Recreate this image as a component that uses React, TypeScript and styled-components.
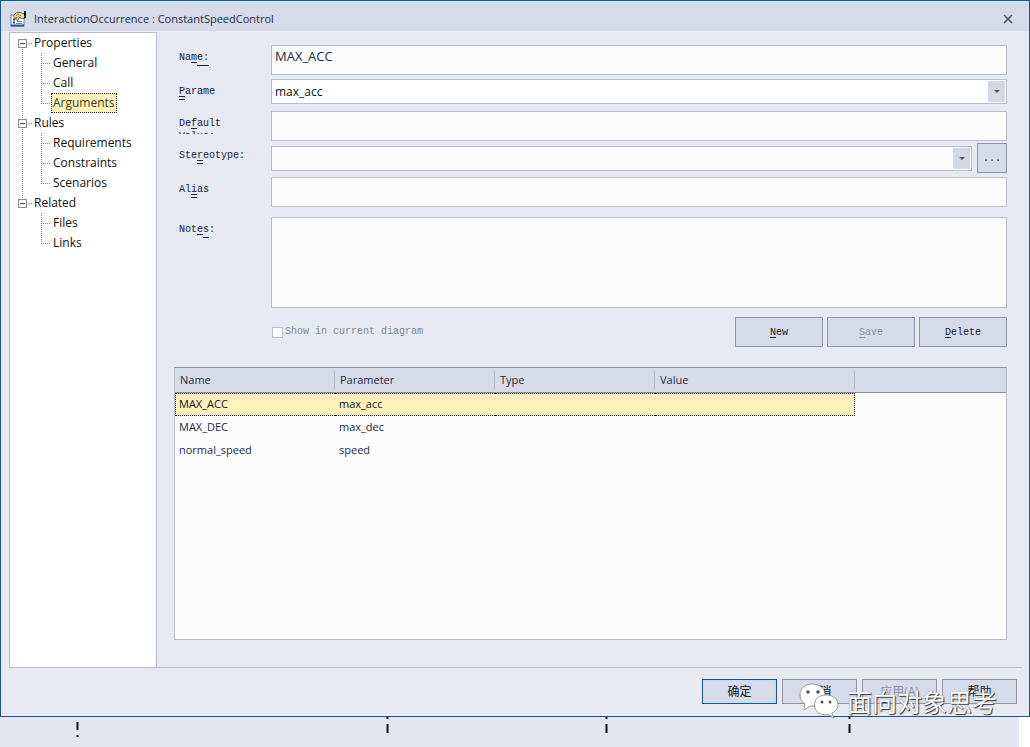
import React from "react";
import styled, { createGlobalStyle, css } from "styled-components";

const UI = `"Open Sans", "Noto Sans CJK SC", sans-serif`;
const MONO = `"Liberation Mono", monospace`;
const LINE = "#b8bccb";
const INK = "#1f2a44";
const DOTS = "repeating-linear-gradient(#888 0 1px, transparent 1px 2px)";

const Global = createGlobalStyle`
  * { box-sizing: border-box; }
  html, body, #root { height: 100%; }
  body { margin: 0; background: #e3e6f1; font: 12px/20px ${UI}; color: ${INK}; }
  button, input, textarea, select { font: inherit; color: inherit; border-radius: 0; margin: 0; }
`;

const Page = styled.div`
  min-height: 100vh;
  display: flex;
  flex-direction: column;
  background: linear-gradient(to left, #fff 11px, #e3e6f1 11px);
`;

const Dialog = styled.main`
  position: relative;
  flex: 1;
  display: flex;
  flex-direction: column;
  background: #e7eaf3;
  border: 1px solid #1a5687;
`;

const TitleBar = styled.header`
  height: 30px;
  display: flex;
  align-items: center;
  gap: 7px;
  padding: 3px 16px 0 9px;
  background: #d6dbe9;
  border-top: 2px solid #cfe3f8;
`;

const Title = styled.h1`
  flex: 1;
  margin: 0;
  font-size: 11px;
  font-weight: 400;
`;

const CloseButton = styled.button`
  display: flex;
  padding: 2px 0;
  border: 0;
  background: none;
  color: #4a4f63;
`;

const Body = styled.div`
  flex: 1;
  display: flex;
  margin: 0 7px 0 8px;
  border-bottom: 1px solid ${LINE};
`;

const Sidebar = styled.nav`
  flex: 0 0 148px;
  margin-top: 1px;
  padding-left: 8px;
  background: #fff;
  border: 1px solid ${LINE};
  border-bottom: 0;
  color: #111;
  font-size: 12px;
  line-height: 18px;
`;

const TreeGroup = styled.section`
  &:not(:last-child) { background: ${DOTS} 4px 14px / 1px 100% no-repeat; }
  &:not(:first-child) > div { background: ${DOTS} 4px 0 / 1px 6px no-repeat; }
`;

const GroupHead = styled.div`
  display: flex;
  align-items: center;
  gap: 2px;
  height: 20px;
`;

const Toggle = styled.button`
  width: 9px;
  height: 9px;
  padding: 0;
  border: 1px solid #8c8c8c;
  background: linear-gradient(#445, #445) center / 5px 1px no-repeat #fff;
`;

const Stub = styled.span<{ $w: number }>`
  width: ${(p) => p.$w}px;
  height: 1px;
  background: repeating-linear-gradient(90deg, #888 0 1px, transparent 1px 2px);
`;

const TreeList = styled.ul`
  list-style: none;
  margin: 0 0 0 23px;
  padding: 0;
`;

const TreeItem = styled.li`
  display: flex;
  align-items: center;
  gap: 1px;
  height: 20px;
  background: ${DOTS} 0 0 / 1px 100% no-repeat;
  &:last-child { background-size: 1px 50%; }
`;

const TreeLink = styled.a<{ $active?: boolean }>`
  display: block;
  height: 20px;
  padding: 0 1px;
  color: inherit;
  text-decoration: none;
  border: 1px dotted transparent;
  ${(p) => p.$active && css`
    background: #fff2bd;
    border-color: #222;
    color: #3d3a20;
  `}
`;

const Content = styled.div`
  flex: 1;
  min-width: 0;
  display: flex;
  flex-direction: column;
  padding: 14px 15px 27px 17px;
`;

const Form = styled.form`
  display: flex;
  flex-direction: column;
`;

const Field = styled.div<{ $gap?: number; $h: number }>`
  display: grid;
  grid-template-columns: 97px minmax(0, 1fr);
  height: ${(p) => p.$h}px;
  margin-bottom: ${(p) => p.$gap ?? 4}px;
`;

const Label = styled.label`
  padding: 6px 0 0 5px;
  font: 10px/14px ${MONO};
  color: #1a2038;
  u { text-underline-offset: 2px; }
`;

const ClippedLabel = styled(Label)`
  width: 70px;
  height: 23px;
  overflow: hidden;
  line-height: 13px;
`;

/* Second, lower accelerator stroke beneath a letter */
const Low = styled.span`
  padding-bottom: 2px;
  border-bottom: 1px solid currentColor;
`;

const boxStyle = css`
  width: 100%;
  min-width: 0;
  border: 1px solid ${LINE};
  background: #fcfcfc;
  outline: 0;
`;

const TextBox = styled.input`
  ${boxStyle}
  height: 30px;
  padding: 0 3px 9px;
  font-size: 13px;
`;

const Notes = styled.textarea`
  ${boxStyle}
  height: 91px;
  resize: none;
`;

const SelectBox = styled.div<{ $white?: boolean }>`
  flex: 1;
  height: 25px;
  display: grid;
  grid-template-columns: minmax(0, 1fr) 18px;
  border: 1px solid ${LINE};
  background: ${(p) => (p.$white ? "#fff" : "#fcfcfc")};
  > * { grid-row: 1; }
`;

const Select = styled.select`
  grid-column: 1 / 3;
  appearance: none;
  border: 0;
  padding: 0 3px;
  background: none;
  color: #111;
`;

const Arrow = styled.span`
  grid-column: 2;
  display: flex;
  align-items: center;
  justify-content: center;
  margin: 1px 1px 1px 0;
  background: #d3d9e6;
  color: #4f566b;
  pointer-events: none;
`;

const StereotypeRow = styled.div`
  display: flex;
  align-items: center;
  gap: 5px;
`;

const Button = styled.button<{ $w: number; $h: number; $mono?: boolean; $primary?: boolean }>`
  width: ${(p) => p.$w}px;
  height: ${(p) => p.$h}px;
  padding: 0;
  background: #d6dbe9;
  border: 1px solid ${(p) => (p.$primary ? "#1a5687" : "#8f94a8")};
  box-shadow: ${(p) => (p.$primary ? "inset 0 0 0 1px #c3ddf4" : "none")};
  ${(p) => p.$mono && css`padding-top: 2px; font: 10px/14px ${MONO};`}
  color: #10182e;
  &:disabled { color: #8b8e9c; }
  u { text-underline-offset: 2px; }
`;

const Actions = styled.div`
  display: flex;
  align-items: center;
  padding-left: 98px;
  margin-bottom: 20px;
`;

const Check = styled.label`
  flex: 1;
  display: flex;
  align-items: center;
  gap: 2px;
  font: 10px/14px ${MONO};
  color: #85888f;
  input {
    appearance: none;
    width: 11px;
    height: 11px;
    border: 1px solid #b9bdc9;
    background: #fff;
  }
`;

const ActionButtons = styled.div`
  display: flex;
  gap: 4px;
`;

const TableFrame = styled.div`
  flex: 1;
  border: 1px solid ${LINE};
  border-top-color: #8d93a5;
  background: linear-gradient(#d6dbe9 24px, #868c9e 24px 25px, #fcfcfc 25px);
`;

const Table = styled.table`
  table-layout: fixed;
  width: 680px;
  border-collapse: separate;
  border-spacing: 0;
  font-size: 11px;
  text-align: left;
  th {
    width: 160px;
    height: 25px;
    padding: 0 5px 1px;
    font-weight: 400;
    line-height: 18px;
    background: linear-gradient(#b6bdd0, #b6bdd0) right 3px / 1px 18px no-repeat;
  }
  th:last-child { width: 200px; }
  td { height: 23px; padding: 0 4px 1px; line-height: 20px; }
`;

const Row = styled.tr<{ $active?: boolean }>`
  ${(p) => p.$active && css`
    color: #111;
    td {
      background: #fff2bd;
      border: 1px dotted #111;
      border-width: 1px 0;
    }
    td:first-child { border-left-width: 1px; padding-left: 3px; }
    td:last-child { border-right-width: 1px; }
  `}
`;

const Footer = styled.footer`
  display: flex;
  justify-content: flex-end;
  gap: 5px;
  padding: 11px 12px 12px;
`;

const Watermark = styled.div`
  position: absolute;
  right: 32px;
  bottom: -3px;
  display: flex;
  align-items: center;
  gap: 8px;
  color: #fff;
  font: 25px/36px "Noto Sans CJK SC", sans-serif;
  text-shadow: 1px 1px 1px #333, 0 0 1px #777;
  pointer-events: none;
`;

const Backdrop = styled.svg`
  display: block;
  width: 100%;
  height: 30px;
`;

const DialogIcon = () => (
  <svg width="17" height="16" viewBox="0 0 17 16" aria-hidden="true">
    <rect x="1" y="4" width="13" height="11" fill="#fff" stroke="#5f7fb8" />
    <path d="M1 14.500h13" stroke="#2450a0" strokeWidth="2" />
    <path d="M3 8.500h2M3 11.500h2" stroke="#26437a" strokeWidth="2" />
    <path d="M7 10.500h5M6 12.500h6" stroke="#5b7ec0" />
    <path d="M3.500 4.500l3-3h4l2 1h2v5h-3l-2-1-2 3-2-1 1-2-2 1z" fill="#e6e08c" stroke="#4a4630" strokeWidth=".8" />
    <path d="M6 4.500l3-1M8 6l3-2" stroke="#8a8450" />
    <path d="M14 0h2v7h-2z" fill="#111" />
  </svg>
);

const Chevron = () => (
  <Arrow>
    <svg width="6" height="3" viewBox="0 0 6 3" aria-hidden="true">
      <path d="M0 0h6L3 3z" fill="currentColor" />
    </svg>
  </Arrow>
);

const ChatLogo = () => (
  <svg width="40" height="36" viewBox="0 0 40 36" aria-hidden="true">
    <g fill="#fff" stroke="#777" strokeWidth=".7">
      <path d="M13 1C6 1 1 6 1 12c0 4 2 7 5 9l-1 6 6-4c8 1 15-4 15-11S20 1 13 1z" />
      <path d="M27 12c-7 0-11.500 4-11.500 10s5.500 11 13.500 9.500l6 3.500-2-5c4-2 6-5 6-8 0-6-5-10-12-10z" />
    </g>
    <g fill="#555">
      <circle cx="9" cy="9" r="1.800" /><circle cx="19" cy="9" r="1.800" />
      <circle cx="23" cy="19" r="1.500" /><circle cx="31" cy="19" r="1.500" />
    </g>
  </svg>
);

const tree = [
  { name: "Properties", items: ["General", "Call", "Arguments"] },
  { name: "Rules", items: ["Requirements", "Constraints", "Scenarios"] },
  { name: "Related", items: ["Files", "Links"] },
];

const rows = [
  ["MAX_ACC", "max_acc"],
  ["MAX_DEC", "max_dec"],
  ["normal_speed", "speed"],
];

export default function App() {
  return (
    <Page>
      <Global />
      <Dialog>
        <TitleBar>
          <DialogIcon />
          <Title>InteractionOccurrence : ConstantSpeedControl</Title>
          <CloseButton aria-label="Close">
            <svg width="10" height="10" viewBox="0 0 10 10" aria-hidden="true">
              <path d="M1 1l8 8M9 1L1 9" stroke="currentColor" strokeWidth="1.500" />
            </svg>
          </CloseButton>
        </TitleBar>
        <Body>
          <Sidebar>
            {tree.map((g) => (
              <TreeGroup key={g.name}>
                <GroupHead>
                  <Toggle aria-label={`Collapse ${g.name}`} />
                  <Stub $w={3} />
                  {g.name}
                </GroupHead>
                <TreeList>
                  {g.items.map((t) => (
                    <TreeItem key={t}>
                      <Stub $w={9} />
                      <TreeLink href="#" $active={t === "Arguments"}>{t}</TreeLink>
                    </TreeItem>
                  ))}
                </TreeList>
              </TreeGroup>
            ))}
          </Sidebar>
          <Content>
            <Form onSubmit={(e) => e.preventDefault()}>
              <Field $h={30}>
                <Label htmlFor="name">Na<u>m</u><Low>e:</Low></Label>
                <TextBox id="name" defaultValue="MAX_ACC" />
              </Field>
              <Field $h={28}>
                <Label htmlFor="param"><Low><u>P</u></Low>arame</Label>
                <SelectBox $white>
                  <Select id="param"><option>max_acc</option></Select>
                  <Chevron />
                </SelectBox>
              </Field>
              <Field $h={30} $gap={2}>
                <ClippedLabel htmlFor="default">De<u>f</u>ault Value:</ClippedLabel>
                <TextBox id="default" />
              </Field>
              <Field $h={30}>
                <Label htmlFor="stereo">Ste<Low><u>r</u></Low>eotype:</Label>
                <StereotypeRow>
                  <SelectBox>
                    <Select id="stereo"><option></option></Select>
                    <Chevron />
                  </SelectBox>
                  <Button type="button" $w={30} $h={30} $mono>...</Button>
                </StereotypeRow>
              </Field>
              <Field $h={30} $gap={10}>
                <Label htmlFor="alias">Al<Low><u>i</u></Low>as</Label>
                <TextBox id="alias" />
              </Field>
              <Field $h={91} $gap={9}>
                <Label htmlFor="notes">Not<u>e</u><Low>s</Low>:</Label>
                <Notes id="notes" />
              </Field>
              <Actions>
                <Check><input type="checkbox" disabled />Show in current diagram</Check>
                <ActionButtons>
                  <Button type="button" $w={88} $h={30} $mono><u>N</u>ew</Button>
                  <Button type="button" $w={88} $h={30} $mono disabled><u>S</u>ave</Button>
                  <Button type="button" $w={88} $h={30} $mono><u>D</u>elete</Button>
                </ActionButtons>
              </Actions>
            </Form>
            <TableFrame>
              <Table>
                <thead>
                  <tr><th>Name</th><th>Parameter</th><th>Type</th><th>Value</th></tr>
                </thead>
                <tbody>
                  {rows.map(([n, p], i) => (
                    <Row key={n} $active={i === 0}><td>{n}</td><td>{p}</td><td /><td /></Row>
                  ))}
                </tbody>
              </Table>
            </TableFrame>
          </Content>
        </Body>
        <Footer>
          <Button $w={75} $h={25} $primary>确定</Button>
          <Button $w={75} $h={25}>取消</Button>
          <Button $w={75} $h={25} disabled>应用(A)</Button>
          <Button $w={75} $h={25}>帮助</Button>
        </Footer>
        <Watermark><ChatLogo />面向对象思考</Watermark>
      </Dialog>
      <Backdrop aria-hidden="true">
        <path d="M77.500 5v8M77.500 18v2M387.500 0v2M387.500 7v9M606.500 0v2M606.500 7v9M849.500 0v2M849.500 7v9" stroke="#111" strokeWidth="2" />
      </Backdrop>
    </Page>
  );
}
